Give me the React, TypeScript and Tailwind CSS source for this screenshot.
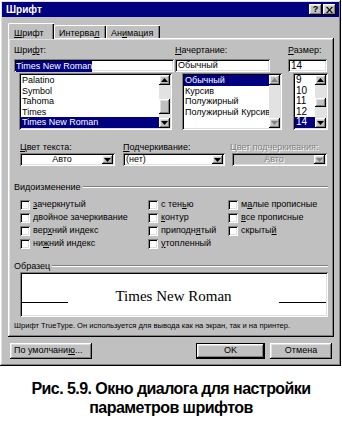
import React from "react";

const raised =
  "shadow-[inset_-1px_-1px_#000,inset_1px_1px_#fff,inset_-2px_-2px_#808080,inset_2px_2px_#dfdfdf]";
const sunken =
  "shadow-[inset_1px_1px_#808080,inset_-1px_-1px_#fff,inset_2px_2px_#000,inset_-2px_-2px_#dfdfdf]";

function U({ children }: { children: React.ReactNode }) {
  return <span className="underline underline-offset-1">{children}</span>;
}

function Tri({ up, off }: { up?: boolean; off?: boolean }) {
  return (
    <svg width="7" height="4" viewBox="0 0 7 4" className="block">
      <path d={up ? "M3.5 0 7 4H0z" : "M0 0h7L3.5 4z"} fill={off ? "#808080" : "#000"} />
    </svg>
  );
}

function ArrowBtn({ up, off, className = "" }: { up?: boolean; off?: boolean; className?: string }) {
  return (
    <div className={`flex shrink-0 items-center justify-center bg-[#c0c0c0] ${raised} ${className}`}>
      <Tri up={up} off={off} />
    </div>
  );
}

function ScrollBar({ thumb, off }: { thumb?: string; off?: boolean }) {
  return (
    <div className="flex w-[11px] shrink-0 flex-col bg-[#e2e2e2]">
      <ArrowBtn up off={off} className="h-[10px] w-[11px]" />
      {thumb && <div className={`w-[11px] bg-[#c0c0c0] ${raised} ${thumb}`} />}
      <div className="flex-1" />
      <ArrowBtn off={off} className="h-[10px] w-[11px]" />
    </div>
  );
}

function ListBox({
  items,
  sel,
  className,
  scroll,
  text = "text-[9px]",
}: {
  items: string[];
  sel: number;
  className: string;
  scroll: React.ReactNode;
  text?: string;
}) {
  return (
    <div className={`flex bg-white p-[2px] ${sunken} ${className}`}>
      <div className={`flex-1 overflow-hidden ${text}`}>
        {items.map((t, i) => (
          <div
            key={t}
            className={`h-[10.6px] overflow-hidden whitespace-nowrap pl-[1px] leading-[10.6px] ${
              i === sel ? "bg-[#000080] text-white" : "text-black"
            }`}
          >
            {t}
          </div>
        ))}
      </div>
      {scroll}
    </div>
  );
}

function Combo({ value, off, center, className }: { value: string; off?: boolean; center?: boolean; className: string }) {
  return (
    <div className={`flex h-[13px] p-[2px] ${off ? "bg-[#c0c0c0]" : "bg-white"} ${sunken} ${className}`}>
      <div
        className={`flex-1 leading-[9px] ${center ? "text-center" : "pl-[1px]"} ${
          off ? "text-[#808080] [text-shadow:1px_1px_0_#fff]" : "text-black"
        }`}
      >
        {value}
      </div>
      <ArrowBtn off={off} className="h-[9px] w-[11px]" />
    </div>
  );
}

function Check({ children }: { children: React.ReactNode }) {
  return (
    <div className="flex h-[13px] items-center gap-[3px]">
      <div className={`h-[10px] w-[10px] bg-white ${sunken}`} />
      <span className="whitespace-nowrap">{children}</span>
    </div>
  );
}

function GroupHead({ children }: { children: React.ReactNode }) {
  return (
    <div className="mr-[6px] flex h-[10px] items-center pl-[6px]">
      <span className="pr-[2px] leading-[10px]">{children}</span>
      <div className="h-[2px] flex-1 border-t border-b border-t-[#808080] border-b-white" />
    </div>
  );
}

export default function App() {
  return (
    <div className="h-[428px] w-[342px] overflow-hidden bg-white font-['Liberation_Sans',Arial,sans-serif] text-[9px] text-black">
      {/* Dialog */}
      <div className={`flex h-[366px] w-[341px] flex-col bg-[#c0c0c0] p-[2px] ${raised}`}>
        {/* Title bar */}
        <div className="flex h-[15px] items-center bg-[#000080] pl-[4px] pr-[3px]">
          <span className="flex-1 text-[10px] font-bold text-white">Шрифт</span>
          <div className={`flex h-[11px] w-[13px] items-center justify-center bg-[#c0c0c0] text-[9px] font-bold leading-none ${raised}`}>
            ?
          </div>
          <div className={`ml-[1px] flex h-[11px] w-[13px] items-center justify-center bg-[#c0c0c0] ${raised}`}>
            <svg width="7" height="6" viewBox="0 0 7 6">
              <path d="M0 0h1.6L3.5 2.2 5.4 0H7L4.3 3 7 6H5.4L3.5 3.8 1.6 6H0l2.7-3z" fill="#000" />
            </svg>
          </div>
        </div>

        {/* Tabs */}
        <div className="ml-[6px] mt-[6px] flex h-[15px] items-end">
          <div className="relative z-10 -mb-[1px] h-[16px] w-[46px] rounded-tl-[2px] border-l border-t border-white bg-[#c0c0c0] pl-[5px] pt-[3px] shadow-[inset_-1px_0_#000,inset_-2px_0_#808080]">
            <U>Ш</U>рифт
          </div>
          <div className="h-[13px] w-[52px] rounded-tl-[2px] border-l border-t border-white pl-[4px] pt-[1px] shadow-[inset_-1px_0_#000,inset_-2px_0_#808080]">
            Интерва<U>л</U>
          </div>
          <div className="h-[13px] w-[54px] rounded-tl-[2px] border-l border-t border-white pl-[4px] pt-[1px] shadow-[inset_-1px_0_#000,inset_-2px_0_#808080]">
            Ан<U>и</U>мация
          </div>
        </div>

        {/* Panel */}
        <div className={`ml-[6px] h-[299px] w-[326px] bg-[#c0c0c0] pt-[6px] ${raised}`}>
          {/* Font / style / size */}
          <div className="flex pl-[6px]">
            <div className="w-[161px]">
              <div className="h-[12px] leading-[12px]">
                Шри<U>ф</U>т:
              </div>
              <div className={`mt-[3px] h-[13px] w-[160px] bg-white px-[2px] py-[1px] ${sunken}`}>
                <span className="inline-block h-[11px] bg-[#000080] leading-[11px] text-white">Times New Roman</span>
              </div>
              <ListBox
                className="ml-[5px] mt-[1px] h-[57px] w-[153px]"
                items={["Palatino", "Symbol", "Tahoma", "Times", "Times New Roman"]}
                sel={4}
                scroll={<ScrollBar thumb="mt-[14px] h-[15px]" />}
              />
            </div>
            <div className="w-[113px]">
              <div className="h-[12px] leading-[12px]">
                <U>Н</U>ачертание:
              </div>
              <div className={`mt-[3px] h-[13px] w-[95px] bg-white px-[3px] py-[1px] leading-[11px] ${sunken}`}>Обычный</div>
              <ListBox
                className="ml-[7px] mt-[1px] h-[57px] w-[100px]"
                items={["Обычный", "Курсив", "Полужирный", "Полужирный Курсив"]}
                sel={0}
                scroll={<ScrollBar off />}
              />
            </div>
            <div className="w-[40px]">
              <div className="h-[12px] leading-[12px]">
                <U>Р</U>азмер:
              </div>
              <div className={`mt-[3px] h-[13px] w-[39px] bg-white px-[3px] py-[1px] text-[10px] leading-[11px] ${sunken}`}>14</div>
              <ListBox
                className="ml-[5px] mt-[1px] h-[57px] w-[35px]"
                items={["9", "10", "11", "12", "14"]}
                sel={4}
                text="text-[10px]"
                scroll={<ScrollBar thumb="mt-[13px] h-[9px]" />}
              />
            </div>
          </div>

          {/* Colour / underline */}
          <div className="mt-[11px] flex pl-[12px]">
            <div className="w-[103px]">
              <div className="h-[12px] leading-[12px]">
                <U>Ц</U>вет текста:
              </div>
              <Combo className="w-[95px]" value="Авто" center />
            </div>
            <div className="w-[107px]">
              <div className="h-[12px] leading-[12px]">
                <U>П</U>одчеркивание:
              </div>
              <Combo className="w-[102px]" value="(нет)" />
            </div>
            <div className="w-[98px]">
              <div className="h-[12px] leading-[12px] text-[#808080] [text-shadow:1px_1px_0_#fff]">Цвет подчеркивания:</div>
              <Combo className="ml-[2px] w-[95px]" value="Авто" center off />
            </div>
          </div>

          {/* Effects */}
          <div className="mt-[16px]">
            <GroupHead>Видоизменение</GroupHead>
            <div className="mt-[6px] flex pl-[12px]">
              <div className="w-[128px]">
                <Check>
                  <U>з</U>ачеркнутый
                </Check>
                <Check>
                  <U>д</U>войное зачеркивание
                </Check>
                <Check>
                  вер<U>х</U>ний индекс
                </Check>
                <Check>
                  ни<U>ж</U>ний индекс
                </Check>
              </div>
              <div className="w-[80px]">
                <Check>
                  с тен<U>ь</U>ю
                </Check>
                <Check>
                  <U>к</U>онтур
                </Check>
                <Check>
                  приподн<U>я</U>тый
                </Check>
                <Check>
                  <U>у</U>топленный
                </Check>
              </div>
              <div>
                <Check>
                  м<U>а</U>лые прописные
                </Check>
                <Check>
                  <U>в</U>се прописные
                </Check>
                <Check>
                  скрыты<U>й</U>
                </Check>
              </div>
            </div>
          </div>

          {/* Sample */}
          <div className="mt-[11px]">
            <GroupHead>Образец</GroupHead>
            <div className={`ml-[12px] mt-[1px] flex h-[45px] w-[308px] items-end bg-white px-[2px] pb-[13px] ${sunken}`}>
              <div className="mb-[1px] h-[1px] w-[46px] bg-black" />
              <div className="flex-1 text-center font-['Liberation_Serif','Times_New_Roman',serif] text-[15px] leading-[15px]">
                Times New Roman
              </div>
              <div className="mb-[1px] h-[1px] w-[47px] bg-black" />
            </div>
          </div>

          <div className="ml-[6px] mt-[4px] h-[10px] whitespace-nowrap text-[7.6px] leading-[10px]">
            Шрифт TrueType. Он используется для вывода как на экран, так и на принтер.
          </div>
        </div>

        {/* Buttons */}
        <div className="ml-[8px] mt-[6px] flex h-[16px]">
          <div className={`flex w-[82px] items-center pl-[4px] ${raised}`}>
            По умолчани<U>ю</U>...
          </div>
          <div className="ml-[104px] w-[69px] border border-black">
            <div className={`flex h-full items-center justify-center ${raised}`}>OK</div>
          </div>
          <div className={`ml-[5px] flex w-[62px] items-center justify-center ${raised}`}>Отмена</div>
        </div>
      </div>

      {/* Caption */}
      <div className="mt-[13px] text-center text-[16px] font-bold leading-[19px] tracking-[-0.55px] text-black">
        <div>Рис. 5.9. Окно диалога для настройки</div>
        <div>параметров шрифтов</div>
      </div>
    </div>
  );
}
